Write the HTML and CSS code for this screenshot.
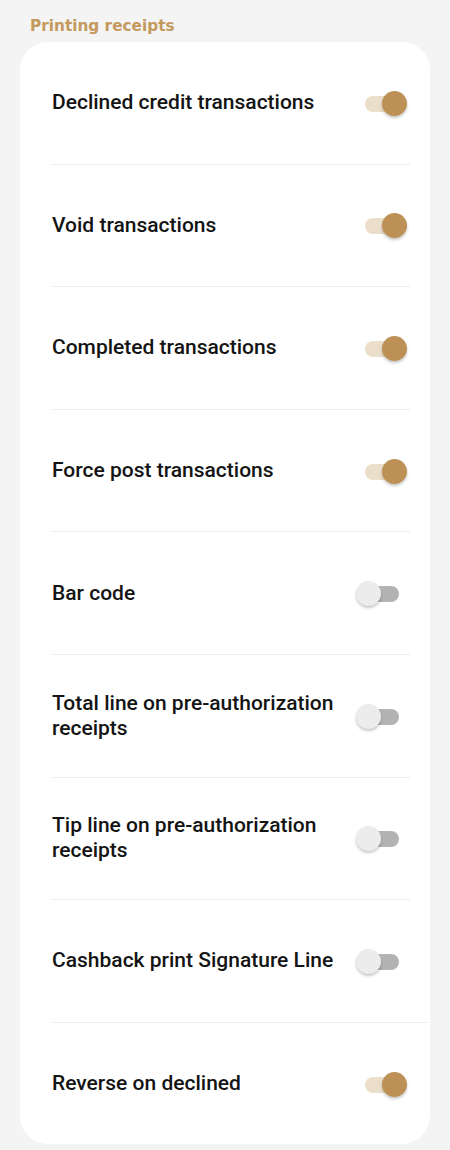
FILE: index.html
```html
<!DOCTYPE html>
<html lang="en">
<head>
    <meta charset="UTF-8">
    <meta name="viewport" content="width=device-width, initial-scale=1.0">
    <title>Printing receipts</title>
    <link rel="stylesheet" href="styles.css">
</head>
<body>
    <h2 class="section-title">Printing receipts</h2>

    <div class="card">
        <div class="row">
            <span class="label">Declined credit transactions</span>
            <span class="switch on"><span class="track"></span><span class="thumb"></span></span>
        </div>
        <div class="row">
            <span class="label">Void transactions</span>
            <span class="switch on"><span class="track"></span><span class="thumb"></span></span>
        </div>
        <div class="row">
            <span class="label">Completed transactions</span>
            <span class="switch on"><span class="track"></span><span class="thumb"></span></span>
        </div>
        <div class="row">
            <span class="label">Force post transactions</span>
            <span class="switch on"><span class="track"></span><span class="thumb"></span></span>
        </div>
        <div class="row">
            <span class="label">Bar code</span>
            <span class="switch"><span class="track"></span><span class="thumb"></span></span>
        </div>
        <div class="row">
            <span class="label">Total line on pre-authorization receipts</span>
            <span class="switch"><span class="track"></span><span class="thumb"></span></span>
        </div>
        <div class="row">
            <span class="label">Tip line on pre-authorization receipts</span>
            <span class="switch"><span class="track"></span><span class="thumb"></span></span>
        </div>
        <div class="row row-wide">
            <span class="label">Cashback print Signature Line</span>
            <span class="switch"><span class="track"></span><span class="thumb"></span></span>
        </div>
        <div class="row">
            <span class="label">Reverse on declined</span>
            <span class="switch on"><span class="track"></span><span class="thumb"></span></span>
        </div>
    </div>
</body>
</html>
```

FILE: styles.css
```css
body {
    margin: 0;
    padding: 0 20px;
    background: #f4f4f4;
    font-family: Roboto, "Liberation Sans", Arial, sans-serif;
}
.section-title {
    margin: 0;
    padding: 17px 0 0 10px;
    height: 25px;
    font-family: "DejaVu Sans", sans-serif;
    font-size: 15.3px;
    line-height: 18px;
    font-weight: bold;
    color: #c3995e;
}
.card {
    background: #fff;
    border-radius: 28px;
    overflow: hidden;
}
.row {
    display: flex;
    align-items: center;
    justify-content: space-between;
    height: 121.6px;
    margin: 0 20px 0 32px;
    border-bottom: 1px solid #ececec;
}
.row:last-child {
    border-bottom: none;
}
.row-wide {
    margin-right: 2px;
    padding-right: 18px;
}
.label {
    flex: 1;
    padding-right: 16px;
    font-size: 21px;
    font-weight: 500;
    line-height: 25px;
    color: #141414;
}
.switch {
    position: relative;
    width: 51px;
    height: 26px;
    margin-top: 2px;
    margin-right: 3px;
    flex-shrink: 0;
}
.track {
    position: absolute;
    left: 7px;
    top: 5px;
    width: 36px;
    height: 16px;
    border-radius: 8px;
    background: #b3b3b3;
}
.thumb {
    position: absolute;
    left: 0;
    top: 0;
    width: 25px;
    height: 25px;
    border-radius: 50%;
    background: #ececec;
    box-shadow: 0 2px 3px rgba(0, 0, 0, 0.22);
}
.switch.on .track {
    left: 9px;
    background: #ebdfcb;
}
.switch.on .thumb {
    left: 26px;
    background: #bd9155;
}
```
